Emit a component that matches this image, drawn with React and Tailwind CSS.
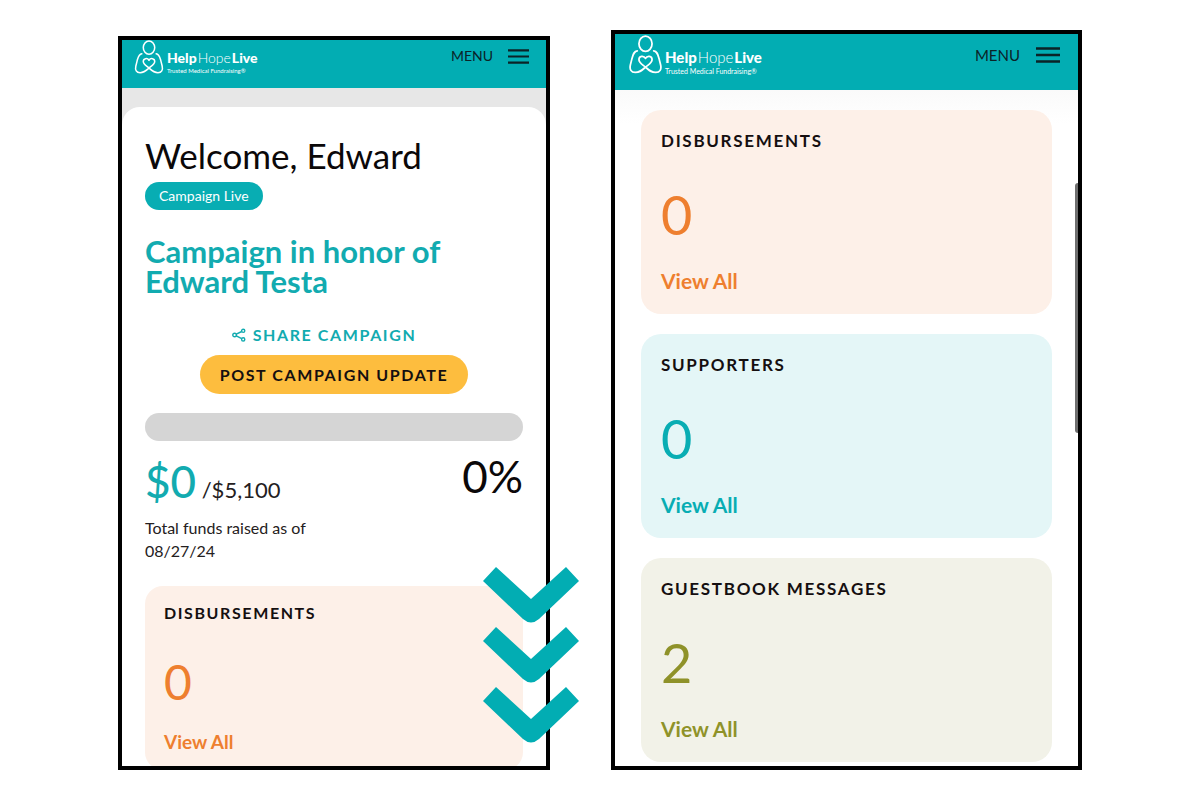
import React from "react";
import clsx from "clsx";

const tones = {
  orange: { card: "bg-[#fdf0e8]", text: "text-[#ee7f2f]" },
  teal: { card: "bg-[#e4f6f7]", text: "text-[#08adb3]" },
  olive: { card: "bg-[#f2f2e8]", text: "text-[#8f9229]" },
};

const stats = [
  { label: "Disbursements", value: 0, tone: "orange" },
  { label: "Supporters", value: 0, tone: "teal" },
  { label: "Guestbook Messages", value: 2, tone: "olive" },
];

function LogoMark({ className }) {
  return (
    <svg
      viewBox="0 0 32 38"
      fill="none"
      stroke="currentColor"
      strokeWidth="1.7"
      strokeLinecap="round"
      strokeLinejoin="round"
      className={className}
      aria-hidden="true"
    >
      <ellipse cx="16" cy="8.5" rx="6.4" ry="7.4" />
      <path d="M8 15.5C4.5 16 4 19 2.8 23L1.3 29C0.2 33.5 2 36.5 6 36.5C10.5 36.5 12.5 34.5 16 31.3C19 28.8 22.4 27 22.4 24C22.4 20.2 17.6 19.8 16 22.8C14.4 19.8 9.6 20.2 9.6 24C9.6 27 13 28.8 16 31.3C19.5 34.5 21.5 36.5 26 36.5C30 36.5 31.8 33.5 30.7 29L29.2 23C28 19 27.5 16 24 15.5" />
    </svg>
  );
}

function ShareIcon() {
  return (
    <svg
      viewBox="0 0 14 14"
      fill="none"
      stroke="currentColor"
      strokeWidth="1.4"
      className="h-3.5 w-3.5"
      aria-hidden="true"
    >
      <circle cx="2.6" cy="7" r="1.8" />
      <circle cx="11.2" cy="2.8" r="1.6" />
      <circle cx="11.2" cy="11.4" r="1.6" />
      <path d="M4.3 6.2L9.7 3.5M4.3 7.9L9.7 10.7" />
    </svg>
  );
}

function Chevron() {
  return (
    <svg viewBox="0 0 96 56" className="h-14 w-24 fill-[#02adb3]">
      <path d="M0 14L13 0L48 32L83 0L96 14L56 52Q48 59 40 52Z" />
    </svg>
  );
}

function Header({ large }) {
  return (
    <header
      className={clsx(
        "flex shrink-0 items-start justify-between bg-[#02adb3]",
        large ? "h-14 pr-[18px] pl-[14px]" : "h-12 pr-[17px] pl-3"
      )}
    >
      <a href="#home" className="flex text-white">
        <LogoMark className={large ? "mt-px h-[39px] w-[33px]" : "h-[34px] w-[30px]"} />
        <span className={clsx("flex flex-col", large ? "pt-[14px] pl-[3px]" : "pt-[10px] pl-[3px]")}>
          <span
            className={clsx(
              "font-black whitespace-nowrap",
              large ? "text-[15px] leading-[18px]" : "text-sm leading-4"
            )}
          >
            Help<span className="pl-px font-light">Hope</span>
            <span className="pl-px">Live</span>
          </span>
          <span
            className={clsx(
              "whitespace-nowrap",
              large ? "text-[7px] leading-[10px]" : "text-[6px] leading-[9px]"
            )}
          >
            Trusted Medical Fundraising®
          </span>
        </span>
      </a>
      <button
        type="button"
        className={clsx(
          "flex items-center text-[#0b2327]",
          large ? "mt-[11px] gap-4 text-[15px] leading-5" : "mt-[7px] gap-[15px] text-sm leading-[18px]"
        )}
      >
        MENU
        <svg
          viewBox="0 0 24 16"
          className={large ? "h-4 w-6" : "h-[15px] w-[21px]"}
          stroke="currentColor"
          strokeWidth="2.3"
          preserveAspectRatio="none"
          aria-hidden="true"
        >
          <path d="M0 1.5H24M0 8H24M0 14.5H24" />
        </svg>
      </button>
    </header>
  );
}

function StatCard({ label, value, tone, large }) {
  return (
    <section
      className={clsx(
        "flex flex-col items-start",
        tones[tone].card,
        large ? "rounded-[20px] px-5 pt-5 pb-[21px]" : "rounded-[18px] px-[19px] pt-[17px] pb-4"
      )}
    >
      <h3
        className={clsx(
          "font-bold tracking-widest text-[#150f10] uppercase",
          large ? "text-[17px] leading-[22px]" : "text-base leading-5"
        )}
      >
        {label}
      </h3>
      <p
        className={clsx(
          tones[tone].text,
          large ? "mt-9 text-[54px] leading-[54px]" : "mt-[35px] text-[48px] leading-[48px]"
        )}
      >
        {value}
      </p>
      <a
        href="#view-all"
        className={clsx(
          "leading-6 font-bold",
          tones[tone].text,
          large ? "mt-[27px] text-[21px]" : "mt-6 text-[19px]"
        )}
      >
        View All
      </a>
    </section>
  );
}

function CampaignScreen() {
  return (
    <div className="flex h-full flex-col overflow-hidden border-4 border-black bg-[#e7e7e7]">
      <Header />
      <main className="mt-[19px] flex-1 rounded-t-[18px] bg-white px-[23px] pt-7">
        <h1 className="text-[35px] leading-10 text-[#0b0809]">Welcome, Edward</h1>
        <span className="mt-[7px] inline-flex h-7 items-center rounded-full bg-[#08adb3] px-[14px] text-sm text-white">
          Campaign Live
        </span>
        <h2 className="mt-[26px] text-[31px] leading-[30px] font-bold text-[#12abb0]">
          Campaign in honor of Edward Testa
        </h2>
        <div className="mt-[29px] flex flex-col items-center">
          <button
            type="button"
            className="mr-5 flex items-center gap-[7px] text-base leading-5 font-bold tracking-widest text-[#12abb0]"
          >
            <ShareIcon />
            SHARE CAMPAIGN
          </button>
          <button
            type="button"
            className="mt-[10px] h-[39px] rounded-full bg-[#fdbd3e] px-5 text-base font-bold tracking-widest text-[#150f10]"
          >
            POST CAMPAIGN UPDATE
          </button>
        </div>
        <div
          role="progressbar"
          aria-label="Funds raised"
          aria-valuenow={0}
          className="mt-[19px] h-7 rounded-full bg-[#d5d5d5]"
        />
        <div className="mt-3 flex items-start justify-between">
          <p className="pt-1 text-[22px] leading-[48px] text-[#242021]">
            <span className="text-[44px] font-medium text-[#12abb0]">$0</span> /$5,100
          </p>
          <p className="text-[44px] leading-[46px] text-[#0b0809]">0%</p>
        </div>
        <p className="mt-0.5 w-[180px] text-base leading-[23px] text-[#242021]">
          Total funds raised as of 08/27/24
        </p>
        <div className="mt-6">
          <StatCard {...stats[0]} />
        </div>
      </main>
    </div>
  );
}

function StatsScreen() {
  return (
    <div className="relative flex h-full flex-col overflow-hidden border-4 border-black bg-white">
      <Header large />
      <main className="flex flex-col gap-5 bg-linear-to-b from-[#fafafa] to-white to-5% px-[26px] pt-5">
        {stats.map((stat) => (
          <StatCard key={stat.label} {...stat} large />
        ))}
      </main>
      <div className="absolute top-[149px] right-0 h-[250px] w-[3px] rounded-l-sm bg-[#6f6f6f]" />
    </div>
  );
}

function App() {
  return (
    <div className="h-screen min-h-[800px] bg-white px-6 py-[30px] font-['Lato','Open_Sans',sans-serif]">
      <div className="mx-auto flex h-full max-w-[964px] gap-[61px]">
        <div className="relative min-w-0 flex-[432] pt-1.5">
          <CampaignScreen />
          <div className="absolute -right-[29px] bottom-[27px] flex flex-col gap-1" aria-hidden="true">
            <Chevron />
            <Chevron />
            <Chevron />
          </div>
        </div>
        <div className="min-w-0 flex-[471]">
          <StatsScreen />
        </div>
      </div>
    </div>
  );
}

export default App;
